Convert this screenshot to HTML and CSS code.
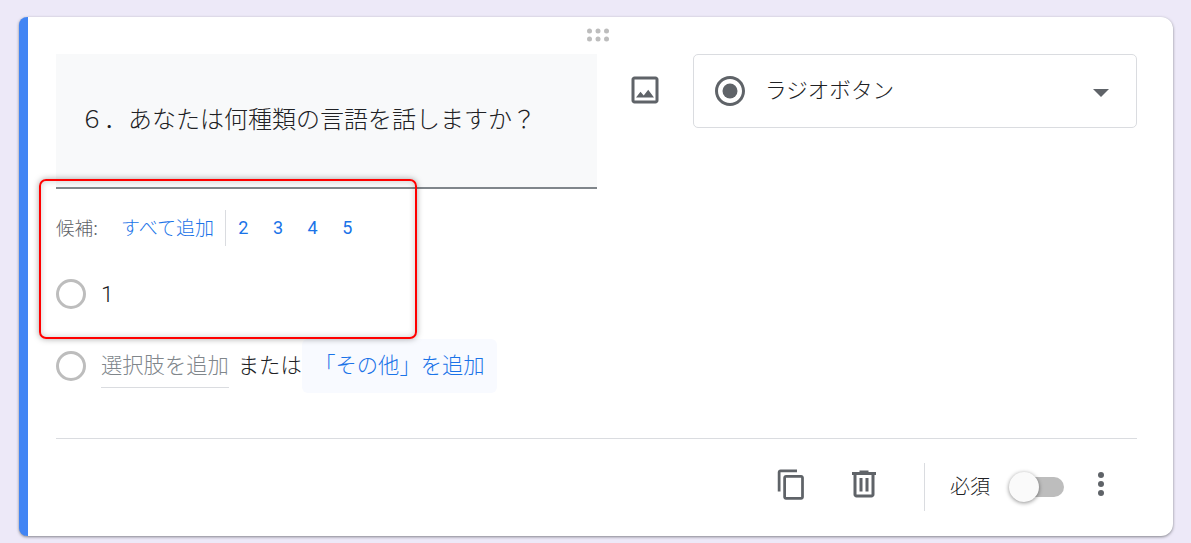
FILE: index.html
```html
<!DOCTYPE html>
<html lang="ja">
<head>
  <meta charset="UTF-8">
  <meta name="viewport" content="width=device-width, initial-scale=1">
  <title>質問の編集</title>
  <link rel="stylesheet" href="styles.css">
</head>
<body>
  <div class="card">
    <!-- ドラッグ用ハンドル -->
    <div class="drag">
      <svg width="24" height="14" viewBox="0 0 24 14" fill="#bdbdbd">
        <circle cx="3.5" cy="3" r="2.5"/><circle cx="12" cy="3" r="2.5"/><circle cx="20.5" cy="3" r="2.5"/>
        <circle cx="3.5" cy="11" r="2.5"/><circle cx="12" cy="11" r="2.5"/><circle cx="20.5" cy="11" r="2.5"/>
      </svg>
    </div>

    <div class="top">
      <div class="question">６．あなたは何種類の言語を話しますか？</div>
      <svg class="icon image-btn" width="36" height="36" viewBox="0 0 24 24"><path d="M19 5v14H5V5h14m0-2H5c-1.1 0-2 .9-2 2v14c0 1.1.9 2 2 2h14c1.1 0 2-.9 2-2V5c0-1.1-.9-2-2-2zm-4.86 8.86l-3 3.87L9 13.14 6 17h12l-3.86-5.14z"/></svg>
      <div class="type-select">
        <svg class="icon" width="36" height="36" viewBox="0 0 24 24"><path d="M12 2C6.48 2 2 6.48 2 12s4.48 10 10 10 10-4.48 10-10S17.52 2 12 2zm0 18c-4.42 0-8-3.58-8-8s3.58-8 8-8 8 3.58 8 8-3.58 8-8 8z"/><circle cx="12" cy="12" r="5"/></svg>
        <span class="type-label">ラジオボタン</span>
        <span class="arrow"></span>
      </div>
    </div>

    <div class="suggest">
      <span class="suggest-label">候補:</span>
      <a class="suggest-all">すべて追加</a>
      <span class="suggest-sep"></span>
      <a class="suggest-num">2</a>
      <a class="suggest-num">3</a>
      <a class="suggest-num">4</a>
      <a class="suggest-num">5</a>
    </div>

    <div class="option">
      <span class="radio"></span>
      <span class="option-text">1</span>
    </div>

    <div class="option option-add">
      <span class="radio"></span>
      <span class="add-input">選択肢を追加</span>
      <span class="add-or">または</span>
      <a class="add-other">「その他」を追加</a>
    </div>

    <div class="footer">
      <svg class="icon footer-icon" width="33" height="33" viewBox="0 0 24 24"><path d="M16 1H4c-1.1 0-2 .9-2 2v14h2V3h12V1zm3 4H8c-1.1 0-2 .9-2 2v14c0 1.1.9 2 2 2h11c1.1 0 2-.9 2-2V7c0-1.1-.9-2-2-2zm0 16H8V7h11v14z"/></svg>
      <svg class="icon footer-icon trash" width="36" height="36" viewBox="0 0 24 24"><path d="M15 4V3H9v1H4v2h1v13c0 1.1.9 2 2 2h10c1.1 0 2-.9 2-2V6h1V4h-5zm2 15H7V6h10v13zM9 8h2v9H9zm4 0h2v9h-2z"/></svg>
      <span class="footer-sep"></span>
      <span class="required">必須</span>
      <span class="toggle"><span class="knob"></span></span>
      <svg class="icon footer-icon kebab" width="36" height="36" viewBox="0 0 24 24"><circle cx="12" cy="6" r="2"/><circle cx="12" cy="12" r="2"/><circle cx="12" cy="18" r="2"/></svg>
    </div>

    <!-- 赤枠の注釈 -->
    <div class="callout"></div>
  </div>
</body>
</html>
```

FILE: styles.css
```css
html, body {
  margin: 0;
  height: 543px;
  overflow: hidden;
}
body {
  background-color: #ede9f8;
  padding: 17px 18px 0 19px;
  box-sizing: border-box;
  font-family: "Noto Sans CJK JP", "Noto Sans", sans-serif;
  font-weight: 300;
  color: #202124;
}
a {
  color: #1a73e8;
}
.icon {
  fill: #5f6368;
  flex: none;
}
.card {
  position: relative;
  box-sizing: border-box;
  height: 519px;
  background-color: #fff;
  border-left: 9px solid #4285f4;
  border-radius: 8px 12px 12px 8px;
  padding: 0 36px 0 28px;
  box-shadow: 0 1px 3px rgba(60, 64, 67, 0.6);
}
.drag {
  height: 37px;
  display: flex;
  justify-content: center;
  align-items: center;
  padding-bottom: 1px;
  box-sizing: border-box;
  margin-left: -34px;
  margin-right: -36px;
}
.top {
  display: flex;
  align-items: flex-start;
}
.question {
  box-sizing: border-box;
  width: 541px;
  height: 135px;
  padding-left: 24px;
  background-color: #f8f9fa;
  border-bottom: 2px solid #80868b;
  font-size: 24px;
  line-height: 128px;
  white-space: nowrap;
}
.image-btn {
  margin: 18px 30px 0 30px;
}
.type-select {
  box-sizing: border-box;
  width: 444px;
  height: 74px;
  display: flex;
  align-items: center;
  padding: 0 27px 0 18px;
  border: 1px solid #dadce0;
  border-radius: 5px;
}
.type-label {
  margin: 0 0 5px 17px;
  font-size: 21.6px;
  flex: 1;
}
.arrow {
  width: 0;
  height: 0;
  border-left: 8px solid transparent;
  border-right: 8px solid transparent;
  border-top: 8px solid #5f6368;
  margin-top: 3px;
}
.suggest {
  display: flex;
  align-items: center;
  height: 36px;
  margin-top: 21px;
}
.suggest-label {
  width: 65px;
  margin-bottom: 4px;
  font-size: 18.6px;
  color: #5f6368;
}
.suggest-all {
  font-size: 19px;
  margin-bottom: 4px;
}
.suggest-sep {
  width: 1px;
  height: 36px;
  margin-left: 11px;
  background-color: #dadce0;
}
.suggest-num {
  width: 34.7px;
  margin-bottom: 2px;
  text-align: center;
  font-family: Roboto, sans-serif;
  font-size: 18px;
  font-weight: 400;
}
.option {
  display: flex;
  align-items: center;
  height: 30px;
  margin-top: 33px;
}
.radio {
  box-sizing: border-box;
  width: 30px;
  height: 30px;
  border: 3px solid #bdbdbd;
  border-radius: 50%;
  flex: none;
}
.option-text {
  margin-left: 15px;
  font-family: Roboto, sans-serif;
  font-size: 22.5px;
}
.option-add {
  height: 54px;
  margin-top: 30px;
  font-size: 21.3px;
}
.add-input {
  box-sizing: border-box;
  height: 36px;
  line-height: 24px;
  margin: 8px 0 0 15px;
  color: #80868b;
  border-bottom: 1px solid #dadce0;
  white-space: nowrap;
}
.add-or {
  margin: 0 0 5px 9px;
}
.add-other {
  display: block;
  padding: 0 12.5px 5px;
  line-height: 49px;
  background-color: #f8faff;
  border-radius: 6px;
}
.footer {
  display: flex;
  align-items: center;
  justify-content: flex-end;
  height: 48px;
  margin-top: 45px;
  padding-top: 24px;
  border-top: 1px solid #dadce0;
}
.footer-icon {
  margin-bottom: 6px;
}
.trash {
  margin-left: 38px;
}
.footer-sep {
  width: 1px;
  height: 48px;
  margin-left: 42px;
  background-color: #dadce0;
}
.required {
  margin: 0 0 4px 25px;
  font-size: 20px;
}
.toggle {
  position: relative;
  width: 40px;
  height: 20px;
  margin-left: 34px;
  background-color: #bdbdbd;
  border-radius: 10px;
}
.knob {
  position: absolute;
  left: -15px;
  top: -5px;
  width: 30px;
  height: 30px;
  border-radius: 50%;
  background-color: #fafafa;
  box-shadow: 0 1px 4px rgba(0, 0, 0, 0.45);
}
.kebab {
  margin: 0 18px 6px 19px;
}
.callout {
  position: absolute;
  left: 11px;
  top: 162px;
  box-sizing: border-box;
  width: 378px;
  height: 160px;
  border: 2px solid #f00;
  border-radius: 7px;
  box-shadow: 0 0 6px rgba(0, 0, 0, 0.35), inset 0 0 6px rgba(0, 0, 0, 0.2);
}
```
